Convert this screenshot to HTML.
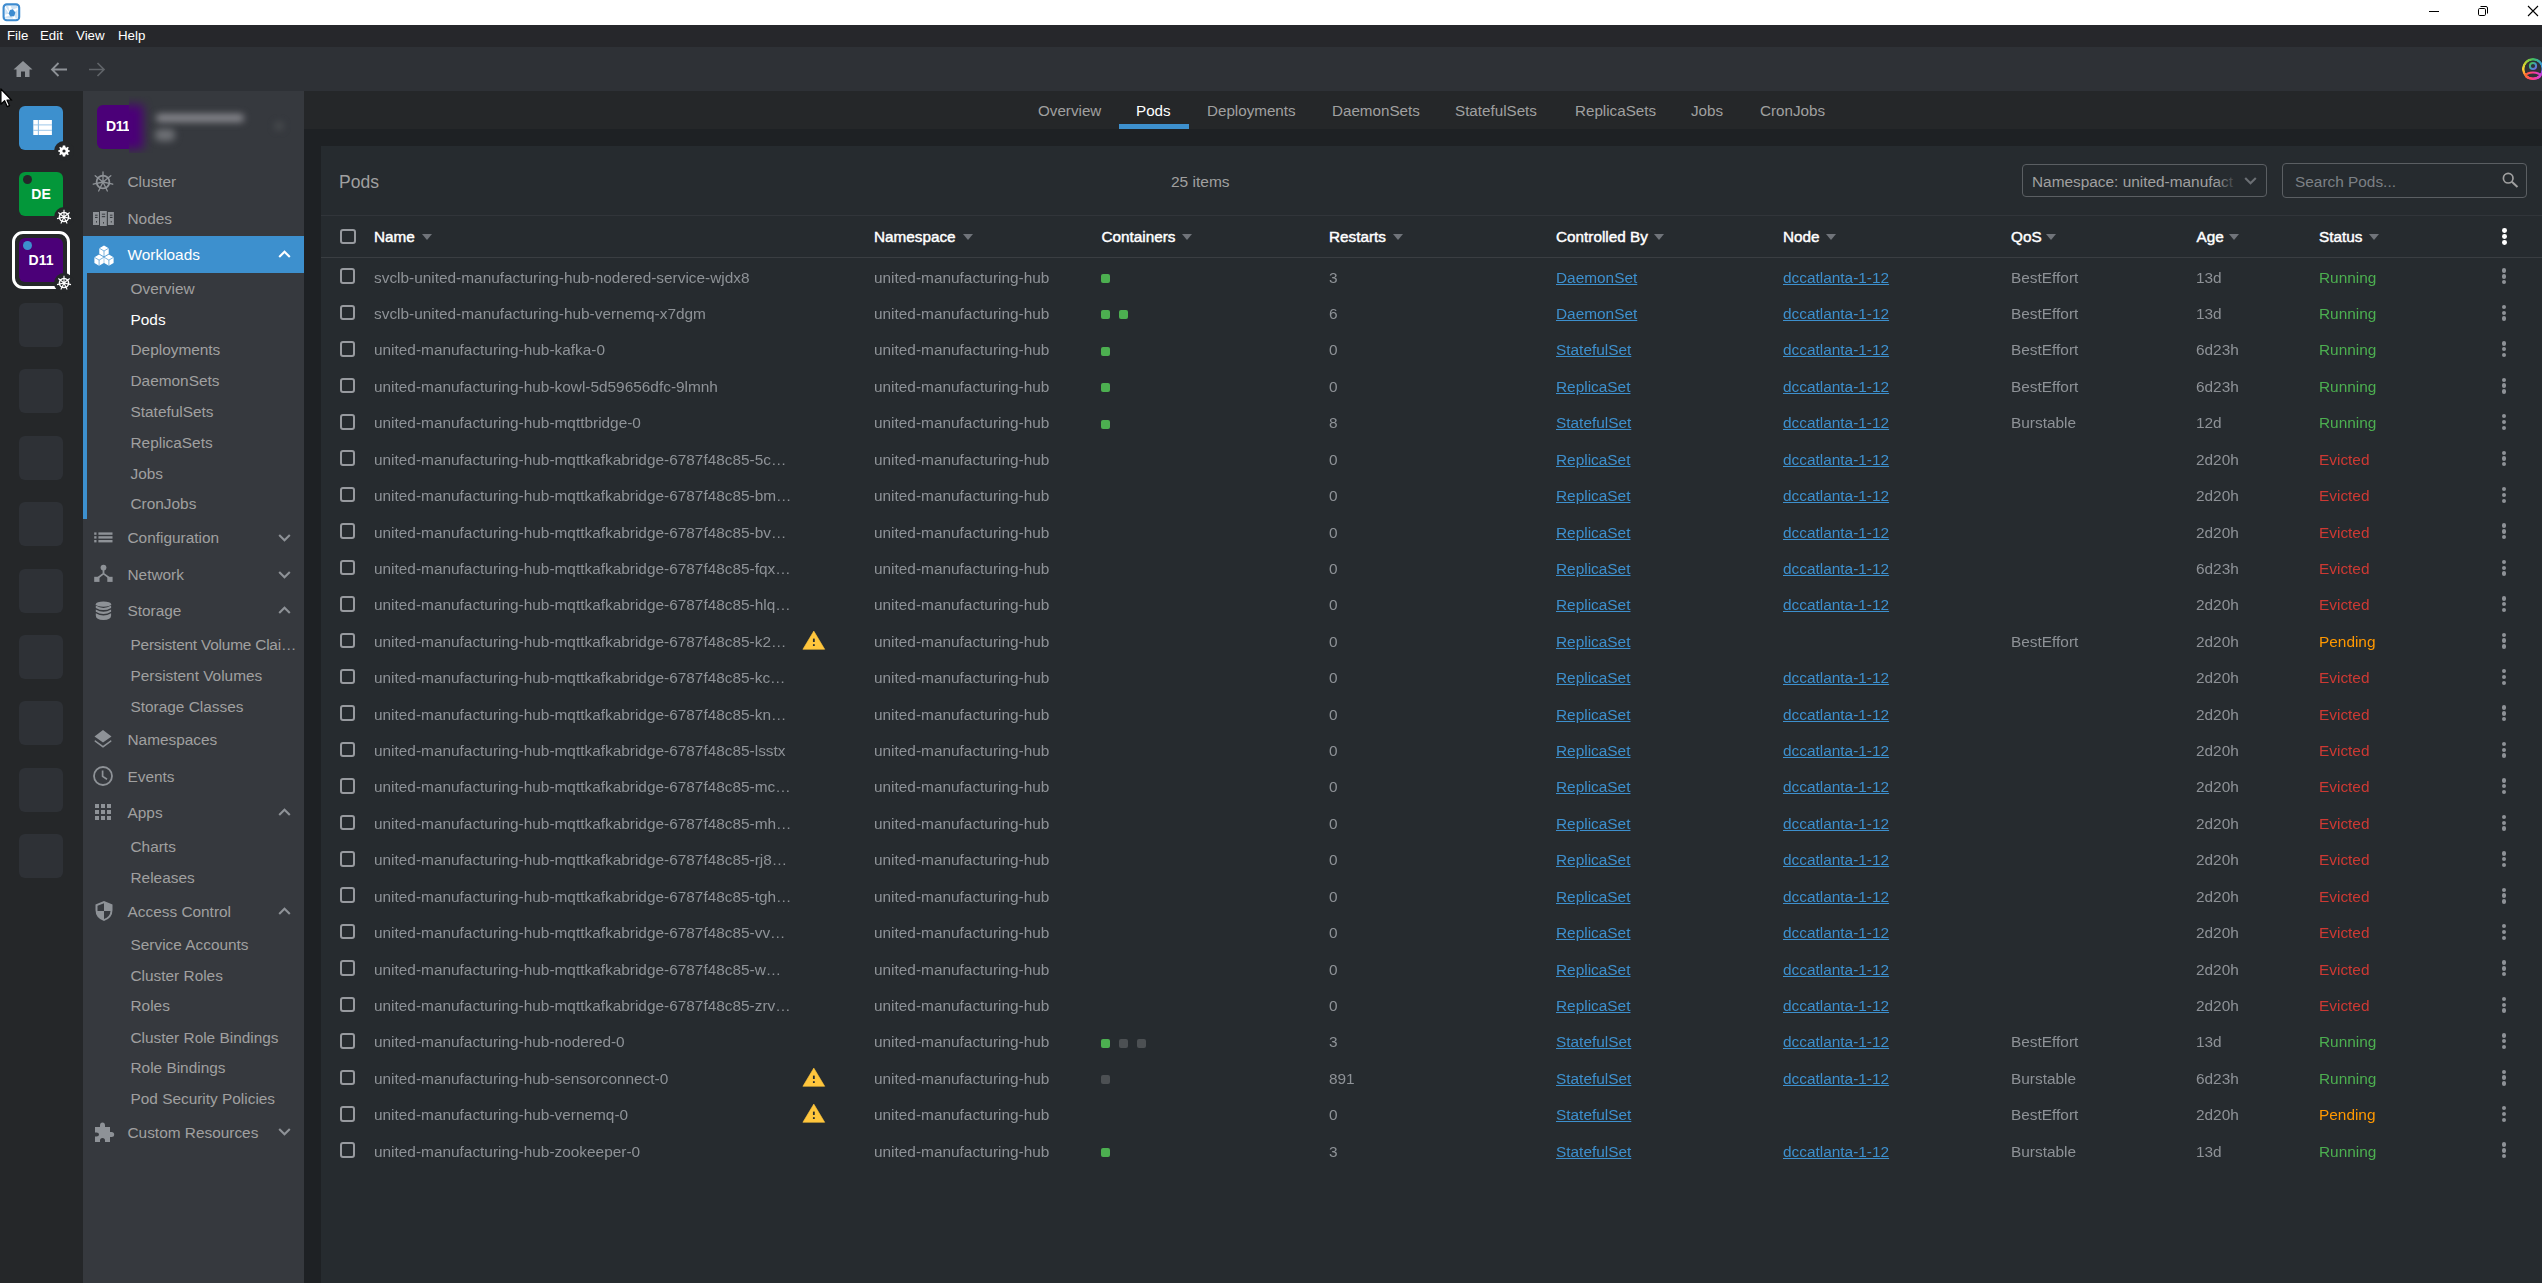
<!DOCTYPE html><html><head><meta charset="utf-8"><style>
*{box-sizing:border-box}
html,body{margin:0;padding:0;width:2542px;height:1283px;overflow:hidden;background:#1e2124;font-family:"Liberation Sans", sans-serif}
.abs{position:absolute}
a{color:#3d90ce;text-decoration:underline}
</style></head><body>

<div class="abs" style="left:0;top:0;width:2542px;height:25px;background:#ffffff"></div>
<svg class="abs" style="left:2px;top:3px" width="19" height="19" viewBox="0 0 19 19"><rect x="1.6" y="1.4" width="15.6" height="15.8" rx="3.2" fill="none" stroke="#3d8bd0" stroke-width="2.1"/><rect x="3.2" y="3" width="12.4" height="12.6" fill="#ffffff"/><path d="M3.2 3 L6.3 3 L7.6 9.5 Z M8.6 3 L15.6 3 L15.6 4.8 L10.2 6.8 Z M15.6 6.8 L15.6 15.6 L13.6 15.6 L12 9.5 Z M11.4 15.6 L3.2 15.6 L3.2 13.8 L8.8 12.2 Z M3.2 11.6 L3.2 5 L7 10.8 Z" fill="#cfe3f5"/><path d="M10.8 6.2 L13.4 9.6 L12.2 13.2 L8.4 13.6 L6.6 10.6 L8 7 Z" fill="#3d8bd0"/></svg>
<div class="abs" style="left:2429px;top:11px;width:10px;height:1px;background:#000"></div>
<svg class="abs" style="left:2477px;top:5px" width="12" height="12" viewBox="0 0 12 12"><rect x="1.5" y="3.5" width="7" height="7" rx="1.2" fill="none" stroke="#000" stroke-width="1"/><path d="M3.5 1.5 H9 Q10.5 1.5 10.5 3 V8.5" fill="none" stroke="#000" stroke-width="1"/></svg>
<svg class="abs" style="left:2527px;top:5px" width="12" height="12" viewBox="0 0 12 12"><path d="M1 1 L11 11 M11 1 L1 11" stroke="#000" stroke-width="1.1"/></svg>
<div class="abs" style="left:0;top:25px;width:2542px;height:22px;background:#26272b"></div>
<div style="position:absolute;left:7px;top:25.50px;height:20px;line-height:20px;font-size:13.3px;color:#ffffff;font-weight:400;white-space:nowrap;">File</div>
<div style="position:absolute;left:40px;top:25.50px;height:20px;line-height:20px;font-size:13.3px;color:#ffffff;font-weight:400;white-space:nowrap;">Edit</div>
<div style="position:absolute;left:76px;top:25.50px;height:20px;line-height:20px;font-size:13.3px;color:#ffffff;font-weight:400;white-space:nowrap;">View</div>
<div style="position:absolute;left:118px;top:25.50px;height:20px;line-height:20px;font-size:13.3px;color:#ffffff;font-weight:400;white-space:nowrap;">Help</div>
<div class="abs" style="left:0;top:47px;width:2542px;height:44px;background:#2e3136"></div>
<svg class="abs" style="left:12px;top:60px" width="22" height="18" viewBox="0 0 22 18"><path d="M11 1 L20.5 9.5 L17.5 9.5 L17.5 17 L13 17 L13 11.5 L9 11.5 L9 17 L4.5 17 L4.5 9.5 L1.5 9.5 Z" fill="#8e9297"/></svg>
<svg class="abs" style="left:50px;top:61px" width="18" height="17" viewBox="0 0 18 17"><path d="M17 8.5 H2.5 M8.5 2 L2 8.5 L8.5 15" fill="none" stroke="#8e9297" stroke-width="1.8"/></svg>
<svg class="abs" style="left:88px;top:61px" width="18" height="17" viewBox="0 0 18 17"><path d="M1 8.5 H15.5 M9.5 2 L16 8.5 L9.5 15" fill="none" stroke="#5f6368" stroke-width="1.7"/></svg>
<div class="abs" style="left:2521.6px;top:57.6px;width:22.6px;height:22.6px;border-radius:50%;background:conic-gradient(#3fbf5f 0deg,#3aa0c8 50deg,#3a8fe0 85deg,#b040e0 115deg,#e040c0 150deg,#ff3a78 190deg,#ff7a30 230deg,#ffd535 270deg,#b8d030 310deg,#3fbf5f 360deg);-webkit-mask:radial-gradient(circle closest-side,transparent 8.2px,#000 8.8px)"></div>
<svg class="abs" style="left:2520px;top:57px" width="26" height="26" viewBox="0 0 26 26">
<defs><linearGradient id="hg" x1="0" y1="0" x2="1" y2="1"><stop offset="0" stop-color="#50c040"/><stop offset="0.5" stop-color="#3aa0c0"/><stop offset="1" stop-color="#8060e0"/></linearGradient>
<linearGradient id="bg2" x1="0" y1="0" x2="1" y2="0"><stop offset="0" stop-color="#ff6a30"/><stop offset="0.5" stop-color="#ff3a90"/><stop offset="1" stop-color="#d040d8"/></linearGradient></defs>
<circle cx="13" cy="9" r="3.1" fill="none" stroke="url(#hg)" stroke-width="2"/>
<ellipse cx="13" cy="18.6" rx="7.4" ry="3.1" fill="none" stroke="url(#bg2)" stroke-width="2.1"/>
</svg>
<div class="abs" style="left:0;top:91px;width:83px;height:1192px;background:#252729"></div>
<svg class="abs" style="left:0;top:85px" width="16" height="25" viewBox="0 85 16 25"><path d="M0.9 89 L0.9 104.2 L4.6 100.8 L7.2 106.6 L9.5 105.6 L7.1 100.2 L11.7 100.2 Z" fill="#fff" stroke="#000" stroke-width="1.3" stroke-linejoin="round"/></svg>
<div class="abs" style="left:19px;top:106px;width:44px;height:44px;border-radius:6px;background:#3d90ce"></div>
<svg class="abs" style="left:33px;top:120px" width="19" height="15" viewBox="0 0 19 15"><rect x="0.3" y="0" width="18.6" height="15" fill="#fff"/><path d="M0 4.9 H19 M0 10.3 H19" stroke="#9cc6e8" stroke-width="1"/><path d="M5.4 0 V15" stroke="#8fbfe6" stroke-width="1.1"/></svg>
<div class="abs" style="left:53.5px;top:141px;width:20px;height:20px;border-radius:50%;background:#252729"></div><svg class="abs" style="left:57.5px;top:145px" width="12" height="12" viewBox="0 0 12 12"><path d="M6 0.6 L7.2 0.6 L7.5 2.2 L8.6 2.7 L9.9 1.8 L10.8 2.7 L9.9 4 L10.4 5.1 L11.9 5.4 L11.9 6.6 L10.4 6.9 L9.9 8 L10.8 9.3 L9.9 10.2 L8.6 9.3 L7.5 9.8 L7.2 11.4 L4.8 11.4 L4.5 9.8 L3.4 9.3 L2.1 10.2 L1.2 9.3 L2.1 8 L1.6 6.9 L0.1 6.6 L0.1 5.4 L1.6 5.1 L2.1 4 L1.2 2.7 L2.1 1.8 L3.4 2.7 L4.5 2.2 L4.8 0.6 Z" fill="#fff"/><circle cx="6" cy="6" r="1.6" fill="#252729"/></svg>
<div class="abs" style="left:19px;top:172px;width:44px;height:44px;border-radius:6px;background:#03973a"></div>
<div class="abs" style="left:23px;top:175px;width:9px;height:9px;border-radius:50%;background:#25272a"></div>
<div style="position:absolute;left:19px;top:184.00px;height:20px;line-height:20px;font-size:14px;color:#fff;font-weight:400;white-space:nowrap;width:44px"><b style="display:block;width:44px;text-align:center">DE</b></div>
<div class="abs" style="left:53.5px;top:207px;width:20px;height:20px;border-radius:50%;background:#252729"></div><svg class="abs" style="left:55.5px;top:209px" width="16" height="16" viewBox="0 0 16 16"><circle cx="8" cy="8" r="4.6" fill="none" stroke="#fff" stroke-width="1.5"/><path d="M8 8 L8.00 0.80" stroke="#fff" stroke-width="1.1"/><path d="M8 8 L13.63 3.51" stroke="#fff" stroke-width="1.1"/><path d="M8 8 L15.02 9.60" stroke="#fff" stroke-width="1.1"/><path d="M8 8 L11.12 14.49" stroke="#fff" stroke-width="1.1"/><path d="M8 8 L4.88 14.49" stroke="#fff" stroke-width="1.1"/><path d="M8 8 L0.98 9.60" stroke="#fff" stroke-width="1.1"/><path d="M8 8 L2.37 3.51" stroke="#fff" stroke-width="1.1"/><circle cx="8" cy="8" r="1.4" fill="#fff"/></svg>
<div class="abs" style="left:12px;top:231px;width:58px;height:58px;border-radius:11px;border:3.2px solid #fff"></div>
<div class="abs" style="left:19px;top:238px;width:44px;height:44px;border-radius:6px;background:#4b0078"></div>
<div class="abs" style="left:23px;top:241px;width:9px;height:9px;border-radius:50%;background:#3d90ce"></div>
<div style="position:absolute;left:19px;top:250.00px;height:20px;line-height:20px;font-size:14px;color:#fff;font-weight:400;white-space:nowrap;width:44px"><b style="display:block;width:44px;text-align:center">D11</b></div>
<div class="abs" style="left:53.5px;top:273px;width:20px;height:20px;border-radius:50%;background:#252729"></div><svg class="abs" style="left:55.5px;top:275px" width="16" height="16" viewBox="0 0 16 16"><circle cx="8" cy="8" r="4.6" fill="none" stroke="#fff" stroke-width="1.5"/><path d="M8 8 L8.00 0.80" stroke="#fff" stroke-width="1.1"/><path d="M8 8 L13.63 3.51" stroke="#fff" stroke-width="1.1"/><path d="M8 8 L15.02 9.60" stroke="#fff" stroke-width="1.1"/><path d="M8 8 L11.12 14.49" stroke="#fff" stroke-width="1.1"/><path d="M8 8 L4.88 14.49" stroke="#fff" stroke-width="1.1"/><path d="M8 8 L0.98 9.60" stroke="#fff" stroke-width="1.1"/><path d="M8 8 L2.37 3.51" stroke="#fff" stroke-width="1.1"/><circle cx="8" cy="8" r="1.4" fill="#fff"/></svg>
<div class="abs" style="left:19px;top:303.0px;width:44px;height:44px;border-radius:6px;background:#2e3136"></div>
<div class="abs" style="left:19px;top:369.4px;width:44px;height:44px;border-radius:6px;background:#2e3136"></div>
<div class="abs" style="left:19px;top:435.8px;width:44px;height:44px;border-radius:6px;background:#2e3136"></div>
<div class="abs" style="left:19px;top:502.2px;width:44px;height:44px;border-radius:6px;background:#2e3136"></div>
<div class="abs" style="left:19px;top:568.6px;width:44px;height:44px;border-radius:6px;background:#2e3136"></div>
<div class="abs" style="left:19px;top:635.0px;width:44px;height:44px;border-radius:6px;background:#2e3136"></div>
<div class="abs" style="left:19px;top:701.4px;width:44px;height:44px;border-radius:6px;background:#2e3136"></div>
<div class="abs" style="left:19px;top:767.8px;width:44px;height:44px;border-radius:6px;background:#2e3136"></div>
<div class="abs" style="left:19px;top:834.2px;width:44px;height:44px;border-radius:6px;background:#2e3136"></div>
<div class="abs" style="left:83px;top:91px;width:221px;height:1192px;background:#36393e"></div>
<div class="abs" style="left:97px;top:105px;width:32px;height:44px;border-radius:6px 0 0 6px;background:#4b0078;overflow:hidden"><div class="abs" style="left:9px;top:11px;height:20px;line-height:20px;font-size:14px;letter-spacing:-0.4px;font-weight:700;color:#fff;white-space:nowrap">D11</div></div>
<div class="abs" style="left:129px;top:96px;width:171px;height:57px;overflow:hidden;background:#36393e"><div class="abs" style="left:-22px;top:9px;width:36px;height:44px;background:#4b0078;filter:blur(5px)"></div><div class="abs" style="left:27px;top:18px;width:88px;height:8px;border-radius:4px;background:#8a8a90;filter:blur(3.5px)"></div><div class="abs" style="left:26px;top:33px;width:20px;height:12px;border-radius:5px;background:#6e7075;filter:blur(3.5px)"></div><div class="abs" style="left:145px;top:25px;width:10px;height:10px;border-radius:5px;background:#45484c;filter:blur(3px)"></div></div>
<svg class="abs" style="left:92.2px;top:170.5px" width="22" height="22" viewBox="0 0 22 22"><circle cx="11" cy="11" r="6.4" fill="none" stroke="#8e9297" stroke-width="1.8"/><path d="M11 11 L11.00 1.00" stroke="#8e9297" stroke-width="1.3" stroke-linecap="round"/><path d="M11 11 L18.82 4.77" stroke="#8e9297" stroke-width="1.3" stroke-linecap="round"/><path d="M11 11 L20.75 13.23" stroke="#8e9297" stroke-width="1.3" stroke-linecap="round"/><path d="M11 11 L15.34 20.01" stroke="#8e9297" stroke-width="1.3" stroke-linecap="round"/><path d="M11 11 L6.66 20.01" stroke="#8e9297" stroke-width="1.3" stroke-linecap="round"/><path d="M11 11 L1.25 13.23" stroke="#8e9297" stroke-width="1.3" stroke-linecap="round"/><path d="M11 11 L3.18 4.77" stroke="#8e9297" stroke-width="1.3" stroke-linecap="round"/><circle cx="11" cy="11" r="1.7" fill="#8e9297"/></svg>
<div style="position:absolute;left:127.5px;top:172.00px;height:20px;line-height:20px;font-size:15.4px;color:#a0a0a0;font-weight:400;white-space:nowrap;">Cluster</div>
<svg class="abs" style="left:90px;top:207px" width="28" height="23" viewBox="90 207 28 23"><rect x="93" y="212" width="6" height="13" fill="#8e9297"/><rect x="100" y="211" width="6.8" height="15" fill="#8e9297"/><rect x="107.9" y="212" width="6" height="13" fill="#8e9297"/><g fill="#36393e" opacity="0.75"><rect x="95" y="214.6" width="2.6" height="1.3"/><rect x="101.8" y="213.6" width="3.4" height="1.3"/><rect x="109.9" y="214.6" width="2.6" height="1.3"/></g><g fill="#36393e"><rect x="95" y="216.9" width="2.6" height="1.1"/><rect x="101.8" y="216.1" width="3.4" height="1.1"/><rect x="109.9" y="216.9" width="2.6" height="1.1"/><rect x="96" y="221" width="0.9" height="1.6"/><rect x="103" y="222" width="0.9" height="1.6"/><rect x="110.8" y="221" width="0.9" height="1.6"/></g></svg>
<div style="position:absolute;left:127.5px;top:209.00px;height:20px;line-height:20px;font-size:15.4px;color:#a0a0a0;font-weight:400;white-space:nowrap;">Nodes</div>
<div class="abs" style="left:83px;top:236px;width:221px;height:37px;background:#3d90ce"></div>
<svg class="abs" style="left:93.5px;top:244.5px" width="20" height="21" viewBox="0 0 20 21"><path d="M10 0.40000000000000036 L14.7 3.2 L14.7 8.8 L10 11.6 L5.3 8.8 L5.3 3.2 Z" fill="#ffffff"/><path d="M5.1 9.5 L9.8 12.3 L9.8 17.9 L5.1 20.7 L0.39999999999999947 17.9 L0.39999999999999947 12.3 Z" fill="#ffffff"/><path d="M14.9 9.5 L19.6 12.3 L19.6 17.9 L14.9 20.7 L10.2 17.9 L10.2 12.3 Z" fill="#ffffff"/><path d="M5.3 3.2 L10 6 L14.7 3.2 M10 6 V11.6" fill="none" stroke="#3d90ce" stroke-width="0.9" opacity="0.75"/><path d="M0.39999999999999947 12.3 L5.1 15.1 L9.8 12.3 M5.1 15.1 V20.7" fill="none" stroke="#3d90ce" stroke-width="0.9" opacity="0.75"/><path d="M10.2 12.3 L14.9 15.1 L19.6 12.3 M14.9 15.1 V20.7" fill="none" stroke="#3d90ce" stroke-width="0.9" opacity="0.75"/></svg>
<div style="position:absolute;left:127.5px;top:245.00px;height:20px;line-height:20px;font-size:15.4px;color:#ffffff;font-weight:400;white-space:nowrap;">Workloads</div>
<svg class="abs" style="left:278px;top:249.5px" width="13" height="9" viewBox="0 0 13 9"><path d="M1.2 7 L6.5 1.8 L11.8 7" fill="none" stroke="#ffffff" stroke-width="2.1"/></svg>
<div class="abs" style="left:83px;top:273px;width:4px;height:246px;background:#3d90ce"></div>
<div style="position:absolute;left:130.5px;top:279.00px;height:20px;line-height:20px;font-size:15.4px;color:#a0a0a0;font-weight:400;white-space:nowrap;">Overview</div>
<div style="position:absolute;left:130.5px;top:310.00px;height:20px;line-height:20px;font-size:15.4px;color:#ffffff;font-weight:400;white-space:nowrap;">Pods</div>
<div style="position:absolute;left:130.5px;top:340.00px;height:20px;line-height:20px;font-size:15.4px;color:#a0a0a0;font-weight:400;white-space:nowrap;">Deployments</div>
<div style="position:absolute;left:130.5px;top:371.00px;height:20px;line-height:20px;font-size:15.4px;color:#a0a0a0;font-weight:400;white-space:nowrap;">DaemonSets</div>
<div style="position:absolute;left:130.5px;top:402.00px;height:20px;line-height:20px;font-size:15.4px;color:#a0a0a0;font-weight:400;white-space:nowrap;">StatefulSets</div>
<div style="position:absolute;left:130.5px;top:433.00px;height:20px;line-height:20px;font-size:15.4px;color:#a0a0a0;font-weight:400;white-space:nowrap;">ReplicaSets</div>
<div style="position:absolute;left:130.5px;top:464.00px;height:20px;line-height:20px;font-size:15.4px;color:#a0a0a0;font-weight:400;white-space:nowrap;">Jobs</div>
<div style="position:absolute;left:130.5px;top:494.00px;height:20px;line-height:20px;font-size:15.4px;color:#a0a0a0;font-weight:400;white-space:nowrap;">CronJobs</div>
<svg class="abs" style="left:90px;top:527px" width="26" height="20" viewBox="90 527 26 20"><g fill="#8e9297"><rect x="94.2" y="532.4" width="2.3" height="2.4"/><rect x="98.4" y="532.4" width="14.1" height="2.4"/><rect x="94.2" y="536.2" width="2.3" height="2.4"/><rect x="98.4" y="536.2" width="14.1" height="2.4"/><rect x="94.2" y="540.0" width="2.3" height="2.4"/><rect x="98.4" y="540.0" width="14.1" height="2.4"/></g></svg>
<div style="position:absolute;left:127.5px;top:528.00px;height:20px;line-height:20px;font-size:15.4px;color:#a0a0a0;font-weight:400;white-space:nowrap;">Configuration</div>
<svg class="abs" style="left:278px;top:532.7px" width="13" height="9" viewBox="0 0 13 9"><path d="M1.2 2 L6.5 7.2 L11.8 2" fill="none" stroke="#8e9297" stroke-width="2.1"/></svg>
<svg class="abs" style="left:90px;top:560px" width="26" height="26" viewBox="90 560 26 26"><circle cx="103.5" cy="567.6" r="2.9" fill="#8e9297"/><path d="M103.5 569 V573.6 L97 578.5 M103.5 573.6 L110 578.5" fill="none" stroke="#8e9297" stroke-width="1.8"/><rect x="94.2" y="576.8" width="5.3" height="5.1" fill="#8e9297"/><rect x="107.3" y="576.8" width="5.3" height="5.1" fill="#8e9297"/></svg>
<div style="position:absolute;left:127.5px;top:565.00px;height:20px;line-height:20px;font-size:15.4px;color:#a0a0a0;font-weight:400;white-space:nowrap;">Network</div>
<svg class="abs" style="left:278px;top:569.7px" width="13" height="9" viewBox="0 0 13 9"><path d="M1.2 2 L6.5 7.2 L11.8 2" fill="none" stroke="#8e9297" stroke-width="2.1"/></svg>
<svg class="abs" style="left:90px;top:596px" width="26" height="28" viewBox="90 596 26 28"><ellipse cx="103.45" cy="604.2" rx="7.65" ry="2.6" fill="#8e9297"/><path d="M95.8 605.6 Q103.45 610.2 111.1 605.6 V607.9 Q103.45 612.3 95.8 607.9 Z" fill="#8e9297"/><path d="M95.8 609.4 Q103.45 614 111.1 609.4 V611.7 Q103.45 616.1 95.8 611.7 Z" fill="#8e9297"/><path d="M95.8 613.2 Q103.45 617.8 111.1 613.2 V615.6 Q111.1 620 103.45 620 Q95.8 620 95.8 615.6 Z" fill="#8e9297"/></svg>
<div style="position:absolute;left:127.5px;top:601.00px;height:20px;line-height:20px;font-size:15.4px;color:#a0a0a0;font-weight:400;white-space:nowrap;">Storage</div>
<svg class="abs" style="left:278px;top:605.5px" width="13" height="9" viewBox="0 0 13 9"><path d="M1.2 7 L6.5 1.8 L11.8 7" fill="none" stroke="#8e9297" stroke-width="2.1"/></svg>
<div style="position:absolute;left:130.5px;top:635.00px;height:20px;line-height:20px;font-size:15.4px;color:#a0a0a0;font-weight:400;white-space:nowrap;"><span style="letter-spacing:-0.2px">Persistent Volume Clai…</span></div>
<div style="position:absolute;left:130.5px;top:666.00px;height:20px;line-height:20px;font-size:15.4px;color:#a0a0a0;font-weight:400;white-space:nowrap;">Persistent Volumes</div>
<div style="position:absolute;left:130.5px;top:697.00px;height:20px;line-height:20px;font-size:15.4px;color:#a0a0a0;font-weight:400;white-space:nowrap;">Storage Classes</div>
<svg class="abs" style="left:92.8px;top:729.2px" width="20" height="20" viewBox="0 0 20 20"><path d="M10 1 L18.5 7.5 L10 13.5 L1.5 7.5 Z" fill="#8e9297"/><path d="M2 11 L10 16.8 L18 11 L18.5 12.5 L10 18.8 L1.5 12.5 Z" fill="#8e9297"/></svg>
<div style="position:absolute;left:127.5px;top:730.00px;height:20px;line-height:20px;font-size:15.4px;color:#a0a0a0;font-weight:400;white-space:nowrap;">Namespaces</div>
<svg class="abs" style="left:93.4px;top:765.5px" width="20" height="20" viewBox="0 0 20 20"><circle cx="10" cy="10" r="9" fill="none" stroke="#8e9297" stroke-width="1.8"/><path d="M9.6 4.6 V10.4 L14 13.2" fill="none" stroke="#8e9297" stroke-width="1.7"/></svg>
<div style="position:absolute;left:127.5px;top:767.00px;height:20px;line-height:20px;font-size:15.4px;color:#a0a0a0;font-weight:400;white-space:nowrap;">Events</div>
<svg class="abs" style="left:93.6px;top:803.3px" width="18" height="18" viewBox="0 0 18 18"><g fill="#8e9297"><rect x="1" y="1" width="4" height="4"/><rect x="1" y="7" width="4" height="4"/><rect x="1" y="13" width="4" height="4"/><rect x="7" y="1" width="4" height="4"/><rect x="7" y="7" width="4" height="4"/><rect x="7" y="13" width="4" height="4"/><rect x="13" y="1" width="4" height="4"/><rect x="13" y="7" width="4" height="4"/><rect x="13" y="13" width="4" height="4"/></g></svg>
<div style="position:absolute;left:127.5px;top:803.00px;height:20px;line-height:20px;font-size:15.4px;color:#a0a0a0;font-weight:400;white-space:nowrap;">Apps</div>
<svg class="abs" style="left:278px;top:807.5px" width="13" height="9" viewBox="0 0 13 9"><path d="M1.2 7 L6.5 1.8 L11.8 7" fill="none" stroke="#8e9297" stroke-width="2.1"/></svg>
<div style="position:absolute;left:130.5px;top:836.50px;height:20px;line-height:20px;font-size:15.4px;color:#a0a0a0;font-weight:400;white-space:nowrap;">Charts</div>
<div style="position:absolute;left:130.5px;top:868.00px;height:20px;line-height:20px;font-size:15.4px;color:#a0a0a0;font-weight:400;white-space:nowrap;">Releases</div>
<svg class="abs" style="left:93.5px;top:900px" width="20" height="22" viewBox="0 0 20 22"><path d="M10 1 L18.5 4.5 V10 Q18.5 18 10 21 Q1.5 18 1.5 10 V4.5 Z" fill="#8e9297"/><path d="M10 3.2 V11 H16.5 Q16 17 10 19 V11 H3.5 V5.8 Z" fill="#36393e"/></svg>
<div style="position:absolute;left:127.5px;top:901.50px;height:20px;line-height:20px;font-size:15.4px;color:#a0a0a0;font-weight:400;white-space:nowrap;">Access Control</div>
<svg class="abs" style="left:278px;top:906.5px" width="13" height="9" viewBox="0 0 13 9"><path d="M1.2 7 L6.5 1.8 L11.8 7" fill="none" stroke="#8e9297" stroke-width="2.1"/></svg>
<div style="position:absolute;left:130.5px;top:935.00px;height:20px;line-height:20px;font-size:15.4px;color:#a0a0a0;font-weight:400;white-space:nowrap;">Service Accounts</div>
<div style="position:absolute;left:130.5px;top:966.00px;height:20px;line-height:20px;font-size:15.4px;color:#a0a0a0;font-weight:400;white-space:nowrap;">Cluster Roles</div>
<div style="position:absolute;left:130.5px;top:996.00px;height:20px;line-height:20px;font-size:15.4px;color:#a0a0a0;font-weight:400;white-space:nowrap;">Roles</div>
<div style="position:absolute;left:130.5px;top:1027.50px;height:20px;line-height:20px;font-size:15.4px;color:#a0a0a0;font-weight:400;white-space:nowrap;">Cluster Role Bindings</div>
<div style="position:absolute;left:130.5px;top:1058.00px;height:20px;line-height:20px;font-size:15.4px;color:#a0a0a0;font-weight:400;white-space:nowrap;">Role Bindings</div>
<div style="position:absolute;left:130.5px;top:1089.00px;height:20px;line-height:20px;font-size:15.4px;color:#a0a0a0;font-weight:400;white-space:nowrap;">Pod Security Policies</div>
<svg class="abs" style="left:92.5px;top:1121px" width="22" height="22" viewBox="0 0 22 22"><path d="M2 6 H7 V4.5 Q7 1.5 9.5 1.5 Q12 1.5 12 4.5 V6 H17 V11 H18.5 Q21.2 11 21.2 13.5 Q21.2 16 18.5 16 H17 V21 H12 V19.5 Q12 17 9.5 17 Q7 17 7 19.5 V21 H2 V15.5 H3.5 Q6 15.5 6 13.5 Q6 11.5 3.5 11.5 H2 Z" fill="#8e9297"/></svg>
<div style="position:absolute;left:127.5px;top:1123.00px;height:20px;line-height:20px;font-size:15.4px;color:#a0a0a0;font-weight:400;white-space:nowrap;">Custom Resources</div>
<svg class="abs" style="left:278px;top:1126.7px" width="13" height="9" viewBox="0 0 13 9"><path d="M1.2 2 L6.5 7.2 L11.8 2" fill="none" stroke="#8e9297" stroke-width="2.1"/></svg>
<div class="abs" style="left:304px;top:91px;width:2238px;height:38px;background:#252729"></div>
<div style="position:absolute;left:1038px;top:100.50px;height:20px;line-height:20px;font-size:15.2px;color:#a0a0a0;font-weight:400;white-space:nowrap;">Overview</div>
<div style="position:absolute;left:1136px;top:100.50px;height:20px;line-height:20px;font-size:15.2px;color:#ffffff;font-weight:400;white-space:nowrap;">Pods</div>
<div style="position:absolute;left:1207px;top:100.50px;height:20px;line-height:20px;font-size:15.2px;color:#a0a0a0;font-weight:400;white-space:nowrap;">Deployments</div>
<div style="position:absolute;left:1332px;top:100.50px;height:20px;line-height:20px;font-size:15.2px;color:#a0a0a0;font-weight:400;white-space:nowrap;">DaemonSets</div>
<div style="position:absolute;left:1455px;top:100.50px;height:20px;line-height:20px;font-size:15.2px;color:#a0a0a0;font-weight:400;white-space:nowrap;">StatefulSets</div>
<div style="position:absolute;left:1575px;top:100.50px;height:20px;line-height:20px;font-size:15.2px;color:#a0a0a0;font-weight:400;white-space:nowrap;">ReplicaSets</div>
<div style="position:absolute;left:1691px;top:100.50px;height:20px;line-height:20px;font-size:15.2px;color:#a0a0a0;font-weight:400;white-space:nowrap;">Jobs</div>
<div style="position:absolute;left:1760px;top:100.50px;height:20px;line-height:20px;font-size:15.2px;color:#a0a0a0;font-weight:400;white-space:nowrap;">CronJobs</div>
<div class="abs" style="left:1119px;top:124px;width:70px;height:5px;background:#3d90ce"></div>
<div class="abs" style="left:321px;top:146px;width:2221px;height:1137px;background:#262b2f"></div>
<div style="position:absolute;left:339px;top:172.00px;height:20px;line-height:20px;font-size:17.5px;color:#a0a0a0;font-weight:400;white-space:nowrap;">Pods</div>
<div style="position:absolute;left:1171px;top:171.50px;height:20px;line-height:20px;font-size:15.5px;color:#a0a0a0;font-weight:400;white-space:nowrap;">25 items</div>
<div class="abs" style="left:2022px;top:164px;width:245px;height:33px;border:1px solid #5b5f63;border-radius:4px"></div>
<div class="abs" style="left:2032px;top:171px;width:204px;height:22px;overflow:hidden"><div style="position:absolute;left:0px;top:1.00px;height:20px;line-height:20px;font-size:15.4px;color:#a0a0a0;font-weight:400;white-space:nowrap;">Namespace: united-manufact</div></div>
<div class="abs" style="left:2216px;top:170px;width:22px;height:24px;background:linear-gradient(to right, rgba(38,43,47,0), #262b2f)"></div>
<svg class="abs" style="left:2244px;top:175.7px" width="13" height="9" viewBox="0 0 13 9"><path d="M1.2 2 L6.5 7.2 L11.8 2" fill="none" stroke="#6b6f74" stroke-width="2.1"/></svg>
<div class="abs" style="left:2282px;top:163px;width:245px;height:35px;border:1px solid #5b5f63;border-radius:4px"></div>
<div style="position:absolute;left:2295px;top:171.50px;height:20px;line-height:20px;font-size:15.4px;color:#7c8085;font-weight:400;white-space:nowrap;">Search Pods...</div>
<svg class="abs" style="left:2502px;top:172px" width="17" height="16" viewBox="0 0 17 16"><circle cx="6.2" cy="6.2" r="4.8" fill="none" stroke="#a0a0a0" stroke-width="1.7"/><path d="M9.8 9.8 L15.5 15" stroke="#a0a0a0" stroke-width="2"/></svg>
<div class="abs" style="left:321px;top:215px;width:2221px;height:1px;background:#31353a"></div>
<div class="abs" style="left:321px;top:257px;width:2221px;height:1px;background:#3a3e42"></div>
<div style="position:absolute;left:340px;top:229px;width:16px;height:15px;border:2px solid #979a9f;border-radius:3px"></div>
<div style="position:absolute;left:374px;top:227.00px;height:20px;line-height:20px;font-size:15.3px;color:#ffffff;font-weight:400;white-space:nowrap;-webkit-text-stroke:0.45px #ffffff">Name</div>
<div style="position:absolute;left:874px;top:227.00px;height:20px;line-height:20px;font-size:15.3px;color:#ffffff;font-weight:400;white-space:nowrap;-webkit-text-stroke:0.45px #ffffff">Namespace</div>
<div style="position:absolute;left:1101.5px;top:227.00px;height:20px;line-height:20px;font-size:15.3px;color:#ffffff;font-weight:400;white-space:nowrap;-webkit-text-stroke:0.45px #ffffff">Containers</div>
<div style="position:absolute;left:1329px;top:227.00px;height:20px;line-height:20px;font-size:15.3px;color:#ffffff;font-weight:400;white-space:nowrap;-webkit-text-stroke:0.45px #ffffff">Restarts</div>
<div style="position:absolute;left:1556px;top:227.00px;height:20px;line-height:20px;font-size:15.3px;color:#ffffff;font-weight:400;white-space:nowrap;-webkit-text-stroke:0.45px #ffffff">Controlled By</div>
<div style="position:absolute;left:1783px;top:227.00px;height:20px;line-height:20px;font-size:15.3px;color:#ffffff;font-weight:400;white-space:nowrap;-webkit-text-stroke:0.45px #ffffff">Node</div>
<div style="position:absolute;left:2011px;top:227.00px;height:20px;line-height:20px;font-size:15.3px;color:#ffffff;font-weight:400;white-space:nowrap;-webkit-text-stroke:0.45px #ffffff">QoS</div>
<div style="position:absolute;left:2196.5px;top:227.00px;height:20px;line-height:20px;font-size:15.3px;color:#ffffff;font-weight:400;white-space:nowrap;-webkit-text-stroke:0.45px #ffffff">Age</div>
<div style="position:absolute;left:2319px;top:227.00px;height:20px;line-height:20px;font-size:15.3px;color:#ffffff;font-weight:400;white-space:nowrap;-webkit-text-stroke:0.45px #ffffff">Status</div>
<div style="position:absolute;left:2502.40px;top:228.30px;width:4.8px;height:4.8px;border-radius:50%;background:#ffffff"></div><div style="position:absolute;left:2502.40px;top:234.10px;width:4.8px;height:4.8px;border-radius:50%;background:#ffffff"></div><div style="position:absolute;left:2502.40px;top:239.90px;width:4.8px;height:4.8px;border-radius:50%;background:#ffffff"></div>
<div style="position:absolute;left:422px;top:234px;width:0;height:0;border-left:5px solid transparent;border-right:5px solid transparent;border-top:6px solid #70747a"></div>
<div style="position:absolute;left:963px;top:234px;width:0;height:0;border-left:5px solid transparent;border-right:5px solid transparent;border-top:6px solid #70747a"></div>
<div style="position:absolute;left:1182px;top:234px;width:0;height:0;border-left:5px solid transparent;border-right:5px solid transparent;border-top:6px solid #70747a"></div>
<div style="position:absolute;left:1393px;top:234px;width:0;height:0;border-left:5px solid transparent;border-right:5px solid transparent;border-top:6px solid #70747a"></div>
<div style="position:absolute;left:1654px;top:234px;width:0;height:0;border-left:5px solid transparent;border-right:5px solid transparent;border-top:6px solid #70747a"></div>
<div style="position:absolute;left:1826px;top:234px;width:0;height:0;border-left:5px solid transparent;border-right:5px solid transparent;border-top:6px solid #70747a"></div>
<div style="position:absolute;left:2046px;top:234px;width:0;height:0;border-left:5px solid transparent;border-right:5px solid transparent;border-top:6px solid #70747a"></div>
<div style="position:absolute;left:2229px;top:234px;width:0;height:0;border-left:5px solid transparent;border-right:5px solid transparent;border-top:6px solid #70747a"></div>
<div style="position:absolute;left:2369px;top:234px;width:0;height:0;border-left:5px solid transparent;border-right:5px solid transparent;border-top:6px solid #70747a"></div>
<div style="position:absolute;left:0;top:0;width:2542px;height:1283px;will-change:transform">
<div style="position:absolute;left:340px;top:268.3px;width:15px;height:15.6px;border:2px solid #979a9f;border-radius:3px"></div>
<div style="position:absolute;left:374px;top:267.60px;height:20px;line-height:20px;font-size:15.4px;color:#8e9297;font-weight:400;white-space:nowrap;">svclb-united-manufacturing-hub-nodered-service-wjdx8</div>
<div style="position:absolute;left:874px;top:267.60px;height:20px;line-height:20px;font-size:15.4px;color:#8e9297;font-weight:400;white-space:nowrap;">united-manufacturing-hub</div>
<div class="abs" style="left:1101px;top:273.90px;width:9px;height:9px;border-radius:2px;background:#4caf50"></div>
<div style="position:absolute;left:1329px;top:267.60px;height:20px;line-height:20px;font-size:15.4px;color:#8e9297;font-weight:400;white-space:nowrap;">3</div>
<div style="position:absolute;left:1556px;top:267.60px;height:20px;line-height:20px;font-size:15.4px;color:#3d90ce;font-weight:400;white-space:nowrap;"><a>DaemonSet</a></div>
<div style="position:absolute;left:1783px;top:267.60px;height:20px;line-height:20px;font-size:15.4px;color:#3d90ce;font-weight:400;white-space:nowrap;"><a>dccatlanta-1-12</a></div>
<div style="position:absolute;left:2011px;top:267.60px;height:20px;line-height:20px;font-size:15.4px;color:#8e9297;font-weight:400;white-space:nowrap;">BestEffort</div>
<div style="position:absolute;left:2196px;top:267.60px;height:20px;line-height:20px;font-size:15.4px;color:#8e9297;font-weight:400;white-space:nowrap;">13d</div>
<div style="position:absolute;left:2319px;top:267.60px;height:20px;line-height:20px;font-size:15.4px;color:#4caf50;font-weight:400;white-space:nowrap;">Running</div>
<div style="position:absolute;left:2502.00px;top:268.40px;width:4.4px;height:4.4px;border-radius:50%;background:#8e9297"></div><div style="position:absolute;left:2502.00px;top:274.20px;width:4.4px;height:4.4px;border-radius:50%;background:#8e9297"></div><div style="position:absolute;left:2502.00px;top:280.00px;width:4.4px;height:4.4px;border-radius:50%;background:#8e9297"></div>
<div style="position:absolute;left:340px;top:304.7px;width:15px;height:15.6px;border:2px solid #979a9f;border-radius:3px"></div>
<div style="position:absolute;left:374px;top:304.02px;height:20px;line-height:20px;font-size:15.4px;color:#8e9297;font-weight:400;white-space:nowrap;">svclb-united-manufacturing-hub-vernemq-x7dgm</div>
<div style="position:absolute;left:874px;top:304.02px;height:20px;line-height:20px;font-size:15.4px;color:#8e9297;font-weight:400;white-space:nowrap;">united-manufacturing-hub</div>
<div class="abs" style="left:1101px;top:310.32px;width:9px;height:9px;border-radius:2px;background:#4caf50"></div>
<div class="abs" style="left:1119px;top:310.32px;width:9px;height:9px;border-radius:2px;background:#4caf50"></div>
<div style="position:absolute;left:1329px;top:304.02px;height:20px;line-height:20px;font-size:15.4px;color:#8e9297;font-weight:400;white-space:nowrap;">6</div>
<div style="position:absolute;left:1556px;top:304.02px;height:20px;line-height:20px;font-size:15.4px;color:#3d90ce;font-weight:400;white-space:nowrap;"><a>DaemonSet</a></div>
<div style="position:absolute;left:1783px;top:304.02px;height:20px;line-height:20px;font-size:15.4px;color:#3d90ce;font-weight:400;white-space:nowrap;"><a>dccatlanta-1-12</a></div>
<div style="position:absolute;left:2011px;top:304.02px;height:20px;line-height:20px;font-size:15.4px;color:#8e9297;font-weight:400;white-space:nowrap;">BestEffort</div>
<div style="position:absolute;left:2196px;top:304.02px;height:20px;line-height:20px;font-size:15.4px;color:#8e9297;font-weight:400;white-space:nowrap;">13d</div>
<div style="position:absolute;left:2319px;top:304.02px;height:20px;line-height:20px;font-size:15.4px;color:#4caf50;font-weight:400;white-space:nowrap;">Running</div>
<div style="position:absolute;left:2502.00px;top:304.82px;width:4.4px;height:4.4px;border-radius:50%;background:#8e9297"></div><div style="position:absolute;left:2502.00px;top:310.62px;width:4.4px;height:4.4px;border-radius:50%;background:#8e9297"></div><div style="position:absolute;left:2502.00px;top:316.42px;width:4.4px;height:4.4px;border-radius:50%;background:#8e9297"></div>
<div style="position:absolute;left:340px;top:341.1px;width:15px;height:15.6px;border:2px solid #979a9f;border-radius:3px"></div>
<div style="position:absolute;left:374px;top:340.44px;height:20px;line-height:20px;font-size:15.4px;color:#8e9297;font-weight:400;white-space:nowrap;">united-manufacturing-hub-kafka-0</div>
<div style="position:absolute;left:874px;top:340.44px;height:20px;line-height:20px;font-size:15.4px;color:#8e9297;font-weight:400;white-space:nowrap;">united-manufacturing-hub</div>
<div class="abs" style="left:1101px;top:346.74px;width:9px;height:9px;border-radius:2px;background:#4caf50"></div>
<div style="position:absolute;left:1329px;top:340.44px;height:20px;line-height:20px;font-size:15.4px;color:#8e9297;font-weight:400;white-space:nowrap;">0</div>
<div style="position:absolute;left:1556px;top:340.44px;height:20px;line-height:20px;font-size:15.4px;color:#3d90ce;font-weight:400;white-space:nowrap;"><a>StatefulSet</a></div>
<div style="position:absolute;left:1783px;top:340.44px;height:20px;line-height:20px;font-size:15.4px;color:#3d90ce;font-weight:400;white-space:nowrap;"><a>dccatlanta-1-12</a></div>
<div style="position:absolute;left:2011px;top:340.44px;height:20px;line-height:20px;font-size:15.4px;color:#8e9297;font-weight:400;white-space:nowrap;">BestEffort</div>
<div style="position:absolute;left:2196px;top:340.44px;height:20px;line-height:20px;font-size:15.4px;color:#8e9297;font-weight:400;white-space:nowrap;">6d23h</div>
<div style="position:absolute;left:2319px;top:340.44px;height:20px;line-height:20px;font-size:15.4px;color:#4caf50;font-weight:400;white-space:nowrap;">Running</div>
<div style="position:absolute;left:2502.00px;top:341.24px;width:4.4px;height:4.4px;border-radius:50%;background:#8e9297"></div><div style="position:absolute;left:2502.00px;top:347.04px;width:4.4px;height:4.4px;border-radius:50%;background:#8e9297"></div><div style="position:absolute;left:2502.00px;top:352.84px;width:4.4px;height:4.4px;border-radius:50%;background:#8e9297"></div>
<div style="position:absolute;left:340px;top:377.6px;width:15px;height:15.6px;border:2px solid #979a9f;border-radius:3px"></div>
<div style="position:absolute;left:374px;top:376.86px;height:20px;line-height:20px;font-size:15.4px;color:#8e9297;font-weight:400;white-space:nowrap;">united-manufacturing-hub-kowl-5d59656dfc-9lmnh</div>
<div style="position:absolute;left:874px;top:376.86px;height:20px;line-height:20px;font-size:15.4px;color:#8e9297;font-weight:400;white-space:nowrap;">united-manufacturing-hub</div>
<div class="abs" style="left:1101px;top:383.16px;width:9px;height:9px;border-radius:2px;background:#4caf50"></div>
<div style="position:absolute;left:1329px;top:376.86px;height:20px;line-height:20px;font-size:15.4px;color:#8e9297;font-weight:400;white-space:nowrap;">0</div>
<div style="position:absolute;left:1556px;top:376.86px;height:20px;line-height:20px;font-size:15.4px;color:#3d90ce;font-weight:400;white-space:nowrap;"><a>ReplicaSet</a></div>
<div style="position:absolute;left:1783px;top:376.86px;height:20px;line-height:20px;font-size:15.4px;color:#3d90ce;font-weight:400;white-space:nowrap;"><a>dccatlanta-1-12</a></div>
<div style="position:absolute;left:2011px;top:376.86px;height:20px;line-height:20px;font-size:15.4px;color:#8e9297;font-weight:400;white-space:nowrap;">BestEffort</div>
<div style="position:absolute;left:2196px;top:376.86px;height:20px;line-height:20px;font-size:15.4px;color:#8e9297;font-weight:400;white-space:nowrap;">6d23h</div>
<div style="position:absolute;left:2319px;top:376.86px;height:20px;line-height:20px;font-size:15.4px;color:#4caf50;font-weight:400;white-space:nowrap;">Running</div>
<div style="position:absolute;left:2502.00px;top:377.66px;width:4.4px;height:4.4px;border-radius:50%;background:#8e9297"></div><div style="position:absolute;left:2502.00px;top:383.46px;width:4.4px;height:4.4px;border-radius:50%;background:#8e9297"></div><div style="position:absolute;left:2502.00px;top:389.26px;width:4.4px;height:4.4px;border-radius:50%;background:#8e9297"></div>
<div style="position:absolute;left:340px;top:414.0px;width:15px;height:15.6px;border:2px solid #979a9f;border-radius:3px"></div>
<div style="position:absolute;left:374px;top:413.28px;height:20px;line-height:20px;font-size:15.4px;color:#8e9297;font-weight:400;white-space:nowrap;">united-manufacturing-hub-mqttbridge-0</div>
<div style="position:absolute;left:874px;top:413.28px;height:20px;line-height:20px;font-size:15.4px;color:#8e9297;font-weight:400;white-space:nowrap;">united-manufacturing-hub</div>
<div class="abs" style="left:1101px;top:419.58px;width:9px;height:9px;border-radius:2px;background:#4caf50"></div>
<div style="position:absolute;left:1329px;top:413.28px;height:20px;line-height:20px;font-size:15.4px;color:#8e9297;font-weight:400;white-space:nowrap;">8</div>
<div style="position:absolute;left:1556px;top:413.28px;height:20px;line-height:20px;font-size:15.4px;color:#3d90ce;font-weight:400;white-space:nowrap;"><a>StatefulSet</a></div>
<div style="position:absolute;left:1783px;top:413.28px;height:20px;line-height:20px;font-size:15.4px;color:#3d90ce;font-weight:400;white-space:nowrap;"><a>dccatlanta-1-12</a></div>
<div style="position:absolute;left:2011px;top:413.28px;height:20px;line-height:20px;font-size:15.4px;color:#8e9297;font-weight:400;white-space:nowrap;">Burstable</div>
<div style="position:absolute;left:2196px;top:413.28px;height:20px;line-height:20px;font-size:15.4px;color:#8e9297;font-weight:400;white-space:nowrap;">12d</div>
<div style="position:absolute;left:2319px;top:413.28px;height:20px;line-height:20px;font-size:15.4px;color:#4caf50;font-weight:400;white-space:nowrap;">Running</div>
<div style="position:absolute;left:2502.00px;top:414.08px;width:4.4px;height:4.4px;border-radius:50%;background:#8e9297"></div><div style="position:absolute;left:2502.00px;top:419.88px;width:4.4px;height:4.4px;border-radius:50%;background:#8e9297"></div><div style="position:absolute;left:2502.00px;top:425.68px;width:4.4px;height:4.4px;border-radius:50%;background:#8e9297"></div>
<div style="position:absolute;left:340px;top:450.4px;width:15px;height:15.6px;border:2px solid #979a9f;border-radius:3px"></div>
<div style="position:absolute;left:374px;top:449.70px;height:20px;line-height:20px;font-size:15.4px;color:#8e9297;font-weight:400;white-space:nowrap;">united-manufacturing-hub-mqttkafkabridge-6787f48c85-5c…</div>
<div style="position:absolute;left:874px;top:449.70px;height:20px;line-height:20px;font-size:15.4px;color:#8e9297;font-weight:400;white-space:nowrap;">united-manufacturing-hub</div>
<div style="position:absolute;left:1329px;top:449.70px;height:20px;line-height:20px;font-size:15.4px;color:#8e9297;font-weight:400;white-space:nowrap;">0</div>
<div style="position:absolute;left:1556px;top:449.70px;height:20px;line-height:20px;font-size:15.4px;color:#3d90ce;font-weight:400;white-space:nowrap;"><a>ReplicaSet</a></div>
<div style="position:absolute;left:1783px;top:449.70px;height:20px;line-height:20px;font-size:15.4px;color:#3d90ce;font-weight:400;white-space:nowrap;"><a>dccatlanta-1-12</a></div>
<div style="position:absolute;left:2196px;top:449.70px;height:20px;line-height:20px;font-size:15.4px;color:#8e9297;font-weight:400;white-space:nowrap;">2d20h</div>
<div style="position:absolute;left:2319px;top:449.70px;height:20px;line-height:20px;font-size:15.4px;color:#ce3933;font-weight:400;white-space:nowrap;">Evicted</div>
<div style="position:absolute;left:2502.00px;top:450.50px;width:4.4px;height:4.4px;border-radius:50%;background:#8e9297"></div><div style="position:absolute;left:2502.00px;top:456.30px;width:4.4px;height:4.4px;border-radius:50%;background:#8e9297"></div><div style="position:absolute;left:2502.00px;top:462.10px;width:4.4px;height:4.4px;border-radius:50%;background:#8e9297"></div>
<div style="position:absolute;left:340px;top:486.8px;width:15px;height:15.6px;border:2px solid #979a9f;border-radius:3px"></div>
<div style="position:absolute;left:374px;top:486.12px;height:20px;line-height:20px;font-size:15.4px;color:#8e9297;font-weight:400;white-space:nowrap;">united-manufacturing-hub-mqttkafkabridge-6787f48c85-bm…</div>
<div style="position:absolute;left:874px;top:486.12px;height:20px;line-height:20px;font-size:15.4px;color:#8e9297;font-weight:400;white-space:nowrap;">united-manufacturing-hub</div>
<div style="position:absolute;left:1329px;top:486.12px;height:20px;line-height:20px;font-size:15.4px;color:#8e9297;font-weight:400;white-space:nowrap;">0</div>
<div style="position:absolute;left:1556px;top:486.12px;height:20px;line-height:20px;font-size:15.4px;color:#3d90ce;font-weight:400;white-space:nowrap;"><a>ReplicaSet</a></div>
<div style="position:absolute;left:1783px;top:486.12px;height:20px;line-height:20px;font-size:15.4px;color:#3d90ce;font-weight:400;white-space:nowrap;"><a>dccatlanta-1-12</a></div>
<div style="position:absolute;left:2196px;top:486.12px;height:20px;line-height:20px;font-size:15.4px;color:#8e9297;font-weight:400;white-space:nowrap;">2d20h</div>
<div style="position:absolute;left:2319px;top:486.12px;height:20px;line-height:20px;font-size:15.4px;color:#ce3933;font-weight:400;white-space:nowrap;">Evicted</div>
<div style="position:absolute;left:2502.00px;top:486.92px;width:4.4px;height:4.4px;border-radius:50%;background:#8e9297"></div><div style="position:absolute;left:2502.00px;top:492.72px;width:4.4px;height:4.4px;border-radius:50%;background:#8e9297"></div><div style="position:absolute;left:2502.00px;top:498.52px;width:4.4px;height:4.4px;border-radius:50%;background:#8e9297"></div>
<div style="position:absolute;left:340px;top:523.2px;width:15px;height:15.6px;border:2px solid #979a9f;border-radius:3px"></div>
<div style="position:absolute;left:374px;top:522.54px;height:20px;line-height:20px;font-size:15.4px;color:#8e9297;font-weight:400;white-space:nowrap;">united-manufacturing-hub-mqttkafkabridge-6787f48c85-bv…</div>
<div style="position:absolute;left:874px;top:522.54px;height:20px;line-height:20px;font-size:15.4px;color:#8e9297;font-weight:400;white-space:nowrap;">united-manufacturing-hub</div>
<div style="position:absolute;left:1329px;top:522.54px;height:20px;line-height:20px;font-size:15.4px;color:#8e9297;font-weight:400;white-space:nowrap;">0</div>
<div style="position:absolute;left:1556px;top:522.54px;height:20px;line-height:20px;font-size:15.4px;color:#3d90ce;font-weight:400;white-space:nowrap;"><a>ReplicaSet</a></div>
<div style="position:absolute;left:1783px;top:522.54px;height:20px;line-height:20px;font-size:15.4px;color:#3d90ce;font-weight:400;white-space:nowrap;"><a>dccatlanta-1-12</a></div>
<div style="position:absolute;left:2196px;top:522.54px;height:20px;line-height:20px;font-size:15.4px;color:#8e9297;font-weight:400;white-space:nowrap;">2d20h</div>
<div style="position:absolute;left:2319px;top:522.54px;height:20px;line-height:20px;font-size:15.4px;color:#ce3933;font-weight:400;white-space:nowrap;">Evicted</div>
<div style="position:absolute;left:2502.00px;top:523.34px;width:4.4px;height:4.4px;border-radius:50%;background:#8e9297"></div><div style="position:absolute;left:2502.00px;top:529.14px;width:4.4px;height:4.4px;border-radius:50%;background:#8e9297"></div><div style="position:absolute;left:2502.00px;top:534.94px;width:4.4px;height:4.4px;border-radius:50%;background:#8e9297"></div>
<div style="position:absolute;left:340px;top:559.7px;width:15px;height:15.6px;border:2px solid #979a9f;border-radius:3px"></div>
<div style="position:absolute;left:374px;top:558.96px;height:20px;line-height:20px;font-size:15.4px;color:#8e9297;font-weight:400;white-space:nowrap;">united-manufacturing-hub-mqttkafkabridge-6787f48c85-fqx…</div>
<div style="position:absolute;left:874px;top:558.96px;height:20px;line-height:20px;font-size:15.4px;color:#8e9297;font-weight:400;white-space:nowrap;">united-manufacturing-hub</div>
<div style="position:absolute;left:1329px;top:558.96px;height:20px;line-height:20px;font-size:15.4px;color:#8e9297;font-weight:400;white-space:nowrap;">0</div>
<div style="position:absolute;left:1556px;top:558.96px;height:20px;line-height:20px;font-size:15.4px;color:#3d90ce;font-weight:400;white-space:nowrap;"><a>ReplicaSet</a></div>
<div style="position:absolute;left:1783px;top:558.96px;height:20px;line-height:20px;font-size:15.4px;color:#3d90ce;font-weight:400;white-space:nowrap;"><a>dccatlanta-1-12</a></div>
<div style="position:absolute;left:2196px;top:558.96px;height:20px;line-height:20px;font-size:15.4px;color:#8e9297;font-weight:400;white-space:nowrap;">6d23h</div>
<div style="position:absolute;left:2319px;top:558.96px;height:20px;line-height:20px;font-size:15.4px;color:#ce3933;font-weight:400;white-space:nowrap;">Evicted</div>
<div style="position:absolute;left:2502.00px;top:559.76px;width:4.4px;height:4.4px;border-radius:50%;background:#8e9297"></div><div style="position:absolute;left:2502.00px;top:565.56px;width:4.4px;height:4.4px;border-radius:50%;background:#8e9297"></div><div style="position:absolute;left:2502.00px;top:571.36px;width:4.4px;height:4.4px;border-radius:50%;background:#8e9297"></div>
<div style="position:absolute;left:340px;top:596.1px;width:15px;height:15.6px;border:2px solid #979a9f;border-radius:3px"></div>
<div style="position:absolute;left:374px;top:595.38px;height:20px;line-height:20px;font-size:15.4px;color:#8e9297;font-weight:400;white-space:nowrap;">united-manufacturing-hub-mqttkafkabridge-6787f48c85-hlq…</div>
<div style="position:absolute;left:874px;top:595.38px;height:20px;line-height:20px;font-size:15.4px;color:#8e9297;font-weight:400;white-space:nowrap;">united-manufacturing-hub</div>
<div style="position:absolute;left:1329px;top:595.38px;height:20px;line-height:20px;font-size:15.4px;color:#8e9297;font-weight:400;white-space:nowrap;">0</div>
<div style="position:absolute;left:1556px;top:595.38px;height:20px;line-height:20px;font-size:15.4px;color:#3d90ce;font-weight:400;white-space:nowrap;"><a>ReplicaSet</a></div>
<div style="position:absolute;left:1783px;top:595.38px;height:20px;line-height:20px;font-size:15.4px;color:#3d90ce;font-weight:400;white-space:nowrap;"><a>dccatlanta-1-12</a></div>
<div style="position:absolute;left:2196px;top:595.38px;height:20px;line-height:20px;font-size:15.4px;color:#8e9297;font-weight:400;white-space:nowrap;">2d20h</div>
<div style="position:absolute;left:2319px;top:595.38px;height:20px;line-height:20px;font-size:15.4px;color:#ce3933;font-weight:400;white-space:nowrap;">Evicted</div>
<div style="position:absolute;left:2502.00px;top:596.18px;width:4.4px;height:4.4px;border-radius:50%;background:#8e9297"></div><div style="position:absolute;left:2502.00px;top:601.98px;width:4.4px;height:4.4px;border-radius:50%;background:#8e9297"></div><div style="position:absolute;left:2502.00px;top:607.78px;width:4.4px;height:4.4px;border-radius:50%;background:#8e9297"></div>
<div style="position:absolute;left:340px;top:632.5px;width:15px;height:15.6px;border:2px solid #979a9f;border-radius:3px"></div>
<div style="position:absolute;left:374px;top:631.80px;height:20px;line-height:20px;font-size:15.4px;color:#8e9297;font-weight:400;white-space:nowrap;">united-manufacturing-hub-mqttkafkabridge-6787f48c85-k2…</div>
<svg style="position:absolute;left:802px;top:629.80px" width="24" height="21" viewBox="0 0 24 21"><path d="M11.8 1.1 L22.7 19.3 L0.9 19.3 Z" fill="#ffc63d" stroke="#ffc63d" stroke-width="0.6" stroke-linejoin="round"/><rect x="10.95" y="8.6" width="1.8" height="3.4" fill="#262b2f"/><rect x="10.95" y="14.2" width="1.8" height="1.8" fill="#262b2f"/></svg>
<div style="position:absolute;left:874px;top:631.80px;height:20px;line-height:20px;font-size:15.4px;color:#8e9297;font-weight:400;white-space:nowrap;">united-manufacturing-hub</div>
<div style="position:absolute;left:1329px;top:631.80px;height:20px;line-height:20px;font-size:15.4px;color:#8e9297;font-weight:400;white-space:nowrap;">0</div>
<div style="position:absolute;left:1556px;top:631.80px;height:20px;line-height:20px;font-size:15.4px;color:#3d90ce;font-weight:400;white-space:nowrap;"><a>ReplicaSet</a></div>
<div style="position:absolute;left:2011px;top:631.80px;height:20px;line-height:20px;font-size:15.4px;color:#8e9297;font-weight:400;white-space:nowrap;">BestEffort</div>
<div style="position:absolute;left:2196px;top:631.80px;height:20px;line-height:20px;font-size:15.4px;color:#8e9297;font-weight:400;white-space:nowrap;">2d20h</div>
<div style="position:absolute;left:2319px;top:631.80px;height:20px;line-height:20px;font-size:15.4px;color:#ff9800;font-weight:400;white-space:nowrap;">Pending</div>
<div style="position:absolute;left:2502.00px;top:632.60px;width:4.4px;height:4.4px;border-radius:50%;background:#8e9297"></div><div style="position:absolute;left:2502.00px;top:638.40px;width:4.4px;height:4.4px;border-radius:50%;background:#8e9297"></div><div style="position:absolute;left:2502.00px;top:644.20px;width:4.4px;height:4.4px;border-radius:50%;background:#8e9297"></div>
<div style="position:absolute;left:340px;top:668.9px;width:15px;height:15.6px;border:2px solid #979a9f;border-radius:3px"></div>
<div style="position:absolute;left:374px;top:668.22px;height:20px;line-height:20px;font-size:15.4px;color:#8e9297;font-weight:400;white-space:nowrap;">united-manufacturing-hub-mqttkafkabridge-6787f48c85-kc…</div>
<div style="position:absolute;left:874px;top:668.22px;height:20px;line-height:20px;font-size:15.4px;color:#8e9297;font-weight:400;white-space:nowrap;">united-manufacturing-hub</div>
<div style="position:absolute;left:1329px;top:668.22px;height:20px;line-height:20px;font-size:15.4px;color:#8e9297;font-weight:400;white-space:nowrap;">0</div>
<div style="position:absolute;left:1556px;top:668.22px;height:20px;line-height:20px;font-size:15.4px;color:#3d90ce;font-weight:400;white-space:nowrap;"><a>ReplicaSet</a></div>
<div style="position:absolute;left:1783px;top:668.22px;height:20px;line-height:20px;font-size:15.4px;color:#3d90ce;font-weight:400;white-space:nowrap;"><a>dccatlanta-1-12</a></div>
<div style="position:absolute;left:2196px;top:668.22px;height:20px;line-height:20px;font-size:15.4px;color:#8e9297;font-weight:400;white-space:nowrap;">2d20h</div>
<div style="position:absolute;left:2319px;top:668.22px;height:20px;line-height:20px;font-size:15.4px;color:#ce3933;font-weight:400;white-space:nowrap;">Evicted</div>
<div style="position:absolute;left:2502.00px;top:669.02px;width:4.4px;height:4.4px;border-radius:50%;background:#8e9297"></div><div style="position:absolute;left:2502.00px;top:674.82px;width:4.4px;height:4.4px;border-radius:50%;background:#8e9297"></div><div style="position:absolute;left:2502.00px;top:680.62px;width:4.4px;height:4.4px;border-radius:50%;background:#8e9297"></div>
<div style="position:absolute;left:340px;top:705.3px;width:15px;height:15.6px;border:2px solid #979a9f;border-radius:3px"></div>
<div style="position:absolute;left:374px;top:704.64px;height:20px;line-height:20px;font-size:15.4px;color:#8e9297;font-weight:400;white-space:nowrap;">united-manufacturing-hub-mqttkafkabridge-6787f48c85-kn…</div>
<div style="position:absolute;left:874px;top:704.64px;height:20px;line-height:20px;font-size:15.4px;color:#8e9297;font-weight:400;white-space:nowrap;">united-manufacturing-hub</div>
<div style="position:absolute;left:1329px;top:704.64px;height:20px;line-height:20px;font-size:15.4px;color:#8e9297;font-weight:400;white-space:nowrap;">0</div>
<div style="position:absolute;left:1556px;top:704.64px;height:20px;line-height:20px;font-size:15.4px;color:#3d90ce;font-weight:400;white-space:nowrap;"><a>ReplicaSet</a></div>
<div style="position:absolute;left:1783px;top:704.64px;height:20px;line-height:20px;font-size:15.4px;color:#3d90ce;font-weight:400;white-space:nowrap;"><a>dccatlanta-1-12</a></div>
<div style="position:absolute;left:2196px;top:704.64px;height:20px;line-height:20px;font-size:15.4px;color:#8e9297;font-weight:400;white-space:nowrap;">2d20h</div>
<div style="position:absolute;left:2319px;top:704.64px;height:20px;line-height:20px;font-size:15.4px;color:#ce3933;font-weight:400;white-space:nowrap;">Evicted</div>
<div style="position:absolute;left:2502.00px;top:705.44px;width:4.4px;height:4.4px;border-radius:50%;background:#8e9297"></div><div style="position:absolute;left:2502.00px;top:711.24px;width:4.4px;height:4.4px;border-radius:50%;background:#8e9297"></div><div style="position:absolute;left:2502.00px;top:717.04px;width:4.4px;height:4.4px;border-radius:50%;background:#8e9297"></div>
<div style="position:absolute;left:340px;top:741.8px;width:15px;height:15.6px;border:2px solid #979a9f;border-radius:3px"></div>
<div style="position:absolute;left:374px;top:741.06px;height:20px;line-height:20px;font-size:15.4px;color:#8e9297;font-weight:400;white-space:nowrap;">united-manufacturing-hub-mqttkafkabridge-6787f48c85-lsstx</div>
<div style="position:absolute;left:874px;top:741.06px;height:20px;line-height:20px;font-size:15.4px;color:#8e9297;font-weight:400;white-space:nowrap;">united-manufacturing-hub</div>
<div style="position:absolute;left:1329px;top:741.06px;height:20px;line-height:20px;font-size:15.4px;color:#8e9297;font-weight:400;white-space:nowrap;">0</div>
<div style="position:absolute;left:1556px;top:741.06px;height:20px;line-height:20px;font-size:15.4px;color:#3d90ce;font-weight:400;white-space:nowrap;"><a>ReplicaSet</a></div>
<div style="position:absolute;left:1783px;top:741.06px;height:20px;line-height:20px;font-size:15.4px;color:#3d90ce;font-weight:400;white-space:nowrap;"><a>dccatlanta-1-12</a></div>
<div style="position:absolute;left:2196px;top:741.06px;height:20px;line-height:20px;font-size:15.4px;color:#8e9297;font-weight:400;white-space:nowrap;">2d20h</div>
<div style="position:absolute;left:2319px;top:741.06px;height:20px;line-height:20px;font-size:15.4px;color:#ce3933;font-weight:400;white-space:nowrap;">Evicted</div>
<div style="position:absolute;left:2502.00px;top:741.86px;width:4.4px;height:4.4px;border-radius:50%;background:#8e9297"></div><div style="position:absolute;left:2502.00px;top:747.66px;width:4.4px;height:4.4px;border-radius:50%;background:#8e9297"></div><div style="position:absolute;left:2502.00px;top:753.46px;width:4.4px;height:4.4px;border-radius:50%;background:#8e9297"></div>
<div style="position:absolute;left:340px;top:778.2px;width:15px;height:15.6px;border:2px solid #979a9f;border-radius:3px"></div>
<div style="position:absolute;left:374px;top:777.48px;height:20px;line-height:20px;font-size:15.4px;color:#8e9297;font-weight:400;white-space:nowrap;">united-manufacturing-hub-mqttkafkabridge-6787f48c85-mc…</div>
<div style="position:absolute;left:874px;top:777.48px;height:20px;line-height:20px;font-size:15.4px;color:#8e9297;font-weight:400;white-space:nowrap;">united-manufacturing-hub</div>
<div style="position:absolute;left:1329px;top:777.48px;height:20px;line-height:20px;font-size:15.4px;color:#8e9297;font-weight:400;white-space:nowrap;">0</div>
<div style="position:absolute;left:1556px;top:777.48px;height:20px;line-height:20px;font-size:15.4px;color:#3d90ce;font-weight:400;white-space:nowrap;"><a>ReplicaSet</a></div>
<div style="position:absolute;left:1783px;top:777.48px;height:20px;line-height:20px;font-size:15.4px;color:#3d90ce;font-weight:400;white-space:nowrap;"><a>dccatlanta-1-12</a></div>
<div style="position:absolute;left:2196px;top:777.48px;height:20px;line-height:20px;font-size:15.4px;color:#8e9297;font-weight:400;white-space:nowrap;">2d20h</div>
<div style="position:absolute;left:2319px;top:777.48px;height:20px;line-height:20px;font-size:15.4px;color:#ce3933;font-weight:400;white-space:nowrap;">Evicted</div>
<div style="position:absolute;left:2502.00px;top:778.28px;width:4.4px;height:4.4px;border-radius:50%;background:#8e9297"></div><div style="position:absolute;left:2502.00px;top:784.08px;width:4.4px;height:4.4px;border-radius:50%;background:#8e9297"></div><div style="position:absolute;left:2502.00px;top:789.88px;width:4.4px;height:4.4px;border-radius:50%;background:#8e9297"></div>
<div style="position:absolute;left:340px;top:814.6px;width:15px;height:15.6px;border:2px solid #979a9f;border-radius:3px"></div>
<div style="position:absolute;left:374px;top:813.90px;height:20px;line-height:20px;font-size:15.4px;color:#8e9297;font-weight:400;white-space:nowrap;">united-manufacturing-hub-mqttkafkabridge-6787f48c85-mh…</div>
<div style="position:absolute;left:874px;top:813.90px;height:20px;line-height:20px;font-size:15.4px;color:#8e9297;font-weight:400;white-space:nowrap;">united-manufacturing-hub</div>
<div style="position:absolute;left:1329px;top:813.90px;height:20px;line-height:20px;font-size:15.4px;color:#8e9297;font-weight:400;white-space:nowrap;">0</div>
<div style="position:absolute;left:1556px;top:813.90px;height:20px;line-height:20px;font-size:15.4px;color:#3d90ce;font-weight:400;white-space:nowrap;"><a>ReplicaSet</a></div>
<div style="position:absolute;left:1783px;top:813.90px;height:20px;line-height:20px;font-size:15.4px;color:#3d90ce;font-weight:400;white-space:nowrap;"><a>dccatlanta-1-12</a></div>
<div style="position:absolute;left:2196px;top:813.90px;height:20px;line-height:20px;font-size:15.4px;color:#8e9297;font-weight:400;white-space:nowrap;">2d20h</div>
<div style="position:absolute;left:2319px;top:813.90px;height:20px;line-height:20px;font-size:15.4px;color:#ce3933;font-weight:400;white-space:nowrap;">Evicted</div>
<div style="position:absolute;left:2502.00px;top:814.70px;width:4.4px;height:4.4px;border-radius:50%;background:#8e9297"></div><div style="position:absolute;left:2502.00px;top:820.50px;width:4.4px;height:4.4px;border-radius:50%;background:#8e9297"></div><div style="position:absolute;left:2502.00px;top:826.30px;width:4.4px;height:4.4px;border-radius:50%;background:#8e9297"></div>
<div style="position:absolute;left:340px;top:851.0px;width:15px;height:15.6px;border:2px solid #979a9f;border-radius:3px"></div>
<div style="position:absolute;left:374px;top:850.32px;height:20px;line-height:20px;font-size:15.4px;color:#8e9297;font-weight:400;white-space:nowrap;">united-manufacturing-hub-mqttkafkabridge-6787f48c85-rj8…</div>
<div style="position:absolute;left:874px;top:850.32px;height:20px;line-height:20px;font-size:15.4px;color:#8e9297;font-weight:400;white-space:nowrap;">united-manufacturing-hub</div>
<div style="position:absolute;left:1329px;top:850.32px;height:20px;line-height:20px;font-size:15.4px;color:#8e9297;font-weight:400;white-space:nowrap;">0</div>
<div style="position:absolute;left:1556px;top:850.32px;height:20px;line-height:20px;font-size:15.4px;color:#3d90ce;font-weight:400;white-space:nowrap;"><a>ReplicaSet</a></div>
<div style="position:absolute;left:1783px;top:850.32px;height:20px;line-height:20px;font-size:15.4px;color:#3d90ce;font-weight:400;white-space:nowrap;"><a>dccatlanta-1-12</a></div>
<div style="position:absolute;left:2196px;top:850.32px;height:20px;line-height:20px;font-size:15.4px;color:#8e9297;font-weight:400;white-space:nowrap;">2d20h</div>
<div style="position:absolute;left:2319px;top:850.32px;height:20px;line-height:20px;font-size:15.4px;color:#ce3933;font-weight:400;white-space:nowrap;">Evicted</div>
<div style="position:absolute;left:2502.00px;top:851.12px;width:4.4px;height:4.4px;border-radius:50%;background:#8e9297"></div><div style="position:absolute;left:2502.00px;top:856.92px;width:4.4px;height:4.4px;border-radius:50%;background:#8e9297"></div><div style="position:absolute;left:2502.00px;top:862.72px;width:4.4px;height:4.4px;border-radius:50%;background:#8e9297"></div>
<div style="position:absolute;left:340px;top:887.4px;width:15px;height:15.6px;border:2px solid #979a9f;border-radius:3px"></div>
<div style="position:absolute;left:374px;top:886.74px;height:20px;line-height:20px;font-size:15.4px;color:#8e9297;font-weight:400;white-space:nowrap;">united-manufacturing-hub-mqttkafkabridge-6787f48c85-tgh…</div>
<div style="position:absolute;left:874px;top:886.74px;height:20px;line-height:20px;font-size:15.4px;color:#8e9297;font-weight:400;white-space:nowrap;">united-manufacturing-hub</div>
<div style="position:absolute;left:1329px;top:886.74px;height:20px;line-height:20px;font-size:15.4px;color:#8e9297;font-weight:400;white-space:nowrap;">0</div>
<div style="position:absolute;left:1556px;top:886.74px;height:20px;line-height:20px;font-size:15.4px;color:#3d90ce;font-weight:400;white-space:nowrap;"><a>ReplicaSet</a></div>
<div style="position:absolute;left:1783px;top:886.74px;height:20px;line-height:20px;font-size:15.4px;color:#3d90ce;font-weight:400;white-space:nowrap;"><a>dccatlanta-1-12</a></div>
<div style="position:absolute;left:2196px;top:886.74px;height:20px;line-height:20px;font-size:15.4px;color:#8e9297;font-weight:400;white-space:nowrap;">2d20h</div>
<div style="position:absolute;left:2319px;top:886.74px;height:20px;line-height:20px;font-size:15.4px;color:#ce3933;font-weight:400;white-space:nowrap;">Evicted</div>
<div style="position:absolute;left:2502.00px;top:887.54px;width:4.4px;height:4.4px;border-radius:50%;background:#8e9297"></div><div style="position:absolute;left:2502.00px;top:893.34px;width:4.4px;height:4.4px;border-radius:50%;background:#8e9297"></div><div style="position:absolute;left:2502.00px;top:899.14px;width:4.4px;height:4.4px;border-radius:50%;background:#8e9297"></div>
<div style="position:absolute;left:340px;top:923.9px;width:15px;height:15.6px;border:2px solid #979a9f;border-radius:3px"></div>
<div style="position:absolute;left:374px;top:923.16px;height:20px;line-height:20px;font-size:15.4px;color:#8e9297;font-weight:400;white-space:nowrap;">united-manufacturing-hub-mqttkafkabridge-6787f48c85-vv…</div>
<div style="position:absolute;left:874px;top:923.16px;height:20px;line-height:20px;font-size:15.4px;color:#8e9297;font-weight:400;white-space:nowrap;">united-manufacturing-hub</div>
<div style="position:absolute;left:1329px;top:923.16px;height:20px;line-height:20px;font-size:15.4px;color:#8e9297;font-weight:400;white-space:nowrap;">0</div>
<div style="position:absolute;left:1556px;top:923.16px;height:20px;line-height:20px;font-size:15.4px;color:#3d90ce;font-weight:400;white-space:nowrap;"><a>ReplicaSet</a></div>
<div style="position:absolute;left:1783px;top:923.16px;height:20px;line-height:20px;font-size:15.4px;color:#3d90ce;font-weight:400;white-space:nowrap;"><a>dccatlanta-1-12</a></div>
<div style="position:absolute;left:2196px;top:923.16px;height:20px;line-height:20px;font-size:15.4px;color:#8e9297;font-weight:400;white-space:nowrap;">2d20h</div>
<div style="position:absolute;left:2319px;top:923.16px;height:20px;line-height:20px;font-size:15.4px;color:#ce3933;font-weight:400;white-space:nowrap;">Evicted</div>
<div style="position:absolute;left:2502.00px;top:923.96px;width:4.4px;height:4.4px;border-radius:50%;background:#8e9297"></div><div style="position:absolute;left:2502.00px;top:929.76px;width:4.4px;height:4.4px;border-radius:50%;background:#8e9297"></div><div style="position:absolute;left:2502.00px;top:935.56px;width:4.4px;height:4.4px;border-radius:50%;background:#8e9297"></div>
<div style="position:absolute;left:340px;top:960.3px;width:15px;height:15.6px;border:2px solid #979a9f;border-radius:3px"></div>
<div style="position:absolute;left:374px;top:959.58px;height:20px;line-height:20px;font-size:15.4px;color:#8e9297;font-weight:400;white-space:nowrap;">united-manufacturing-hub-mqttkafkabridge-6787f48c85-w…</div>
<div style="position:absolute;left:874px;top:959.58px;height:20px;line-height:20px;font-size:15.4px;color:#8e9297;font-weight:400;white-space:nowrap;">united-manufacturing-hub</div>
<div style="position:absolute;left:1329px;top:959.58px;height:20px;line-height:20px;font-size:15.4px;color:#8e9297;font-weight:400;white-space:nowrap;">0</div>
<div style="position:absolute;left:1556px;top:959.58px;height:20px;line-height:20px;font-size:15.4px;color:#3d90ce;font-weight:400;white-space:nowrap;"><a>ReplicaSet</a></div>
<div style="position:absolute;left:1783px;top:959.58px;height:20px;line-height:20px;font-size:15.4px;color:#3d90ce;font-weight:400;white-space:nowrap;"><a>dccatlanta-1-12</a></div>
<div style="position:absolute;left:2196px;top:959.58px;height:20px;line-height:20px;font-size:15.4px;color:#8e9297;font-weight:400;white-space:nowrap;">2d20h</div>
<div style="position:absolute;left:2319px;top:959.58px;height:20px;line-height:20px;font-size:15.4px;color:#ce3933;font-weight:400;white-space:nowrap;">Evicted</div>
<div style="position:absolute;left:2502.00px;top:960.38px;width:4.4px;height:4.4px;border-radius:50%;background:#8e9297"></div><div style="position:absolute;left:2502.00px;top:966.18px;width:4.4px;height:4.4px;border-radius:50%;background:#8e9297"></div><div style="position:absolute;left:2502.00px;top:971.98px;width:4.4px;height:4.4px;border-radius:50%;background:#8e9297"></div>
<div style="position:absolute;left:340px;top:996.7px;width:15px;height:15.6px;border:2px solid #979a9f;border-radius:3px"></div>
<div style="position:absolute;left:374px;top:996.00px;height:20px;line-height:20px;font-size:15.4px;color:#8e9297;font-weight:400;white-space:nowrap;">united-manufacturing-hub-mqttkafkabridge-6787f48c85-zrv…</div>
<div style="position:absolute;left:874px;top:996.00px;height:20px;line-height:20px;font-size:15.4px;color:#8e9297;font-weight:400;white-space:nowrap;">united-manufacturing-hub</div>
<div style="position:absolute;left:1329px;top:996.00px;height:20px;line-height:20px;font-size:15.4px;color:#8e9297;font-weight:400;white-space:nowrap;">0</div>
<div style="position:absolute;left:1556px;top:996.00px;height:20px;line-height:20px;font-size:15.4px;color:#3d90ce;font-weight:400;white-space:nowrap;"><a>ReplicaSet</a></div>
<div style="position:absolute;left:1783px;top:996.00px;height:20px;line-height:20px;font-size:15.4px;color:#3d90ce;font-weight:400;white-space:nowrap;"><a>dccatlanta-1-12</a></div>
<div style="position:absolute;left:2196px;top:996.00px;height:20px;line-height:20px;font-size:15.4px;color:#8e9297;font-weight:400;white-space:nowrap;">2d20h</div>
<div style="position:absolute;left:2319px;top:996.00px;height:20px;line-height:20px;font-size:15.4px;color:#ce3933;font-weight:400;white-space:nowrap;">Evicted</div>
<div style="position:absolute;left:2502.00px;top:996.80px;width:4.4px;height:4.4px;border-radius:50%;background:#8e9297"></div><div style="position:absolute;left:2502.00px;top:1002.60px;width:4.4px;height:4.4px;border-radius:50%;background:#8e9297"></div><div style="position:absolute;left:2502.00px;top:1008.40px;width:4.4px;height:4.4px;border-radius:50%;background:#8e9297"></div>
<div style="position:absolute;left:340px;top:1033.1px;width:15px;height:15.6px;border:2px solid #979a9f;border-radius:3px"></div>
<div style="position:absolute;left:374px;top:1032.42px;height:20px;line-height:20px;font-size:15.4px;color:#8e9297;font-weight:400;white-space:nowrap;">united-manufacturing-hub-nodered-0</div>
<div style="position:absolute;left:874px;top:1032.42px;height:20px;line-height:20px;font-size:15.4px;color:#8e9297;font-weight:400;white-space:nowrap;">united-manufacturing-hub</div>
<div class="abs" style="left:1101px;top:1038.72px;width:9px;height:9px;border-radius:2px;background:#4caf50"></div>
<div class="abs" style="left:1119px;top:1038.72px;width:9px;height:9px;border-radius:2px;background:#4c5053"></div>
<div class="abs" style="left:1137px;top:1038.72px;width:9px;height:9px;border-radius:2px;background:#4c5053"></div>
<div style="position:absolute;left:1329px;top:1032.42px;height:20px;line-height:20px;font-size:15.4px;color:#8e9297;font-weight:400;white-space:nowrap;">3</div>
<div style="position:absolute;left:1556px;top:1032.42px;height:20px;line-height:20px;font-size:15.4px;color:#3d90ce;font-weight:400;white-space:nowrap;"><a>StatefulSet</a></div>
<div style="position:absolute;left:1783px;top:1032.42px;height:20px;line-height:20px;font-size:15.4px;color:#3d90ce;font-weight:400;white-space:nowrap;"><a>dccatlanta-1-12</a></div>
<div style="position:absolute;left:2011px;top:1032.42px;height:20px;line-height:20px;font-size:15.4px;color:#8e9297;font-weight:400;white-space:nowrap;">BestEffort</div>
<div style="position:absolute;left:2196px;top:1032.42px;height:20px;line-height:20px;font-size:15.4px;color:#8e9297;font-weight:400;white-space:nowrap;">13d</div>
<div style="position:absolute;left:2319px;top:1032.42px;height:20px;line-height:20px;font-size:15.4px;color:#4caf50;font-weight:400;white-space:nowrap;">Running</div>
<div style="position:absolute;left:2502.00px;top:1033.22px;width:4.4px;height:4.4px;border-radius:50%;background:#8e9297"></div><div style="position:absolute;left:2502.00px;top:1039.02px;width:4.4px;height:4.4px;border-radius:50%;background:#8e9297"></div><div style="position:absolute;left:2502.00px;top:1044.82px;width:4.4px;height:4.4px;border-radius:50%;background:#8e9297"></div>
<div style="position:absolute;left:340px;top:1069.5px;width:15px;height:15.6px;border:2px solid #979a9f;border-radius:3px"></div>
<div style="position:absolute;left:374px;top:1068.84px;height:20px;line-height:20px;font-size:15.4px;color:#8e9297;font-weight:400;white-space:nowrap;">united-manufacturing-hub-sensorconnect-0</div>
<svg style="position:absolute;left:802px;top:1066.84px" width="24" height="21" viewBox="0 0 24 21"><path d="M11.8 1.1 L22.7 19.3 L0.9 19.3 Z" fill="#ffc63d" stroke="#ffc63d" stroke-width="0.6" stroke-linejoin="round"/><rect x="10.95" y="8.6" width="1.8" height="3.4" fill="#262b2f"/><rect x="10.95" y="14.2" width="1.8" height="1.8" fill="#262b2f"/></svg>
<div style="position:absolute;left:874px;top:1068.84px;height:20px;line-height:20px;font-size:15.4px;color:#8e9297;font-weight:400;white-space:nowrap;">united-manufacturing-hub</div>
<div class="abs" style="left:1101px;top:1075.14px;width:9px;height:9px;border-radius:2px;background:#4c5053"></div>
<div style="position:absolute;left:1329px;top:1068.84px;height:20px;line-height:20px;font-size:15.4px;color:#8e9297;font-weight:400;white-space:nowrap;">891</div>
<div style="position:absolute;left:1556px;top:1068.84px;height:20px;line-height:20px;font-size:15.4px;color:#3d90ce;font-weight:400;white-space:nowrap;"><a>StatefulSet</a></div>
<div style="position:absolute;left:1783px;top:1068.84px;height:20px;line-height:20px;font-size:15.4px;color:#3d90ce;font-weight:400;white-space:nowrap;"><a>dccatlanta-1-12</a></div>
<div style="position:absolute;left:2011px;top:1068.84px;height:20px;line-height:20px;font-size:15.4px;color:#8e9297;font-weight:400;white-space:nowrap;">Burstable</div>
<div style="position:absolute;left:2196px;top:1068.84px;height:20px;line-height:20px;font-size:15.4px;color:#8e9297;font-weight:400;white-space:nowrap;">6d23h</div>
<div style="position:absolute;left:2319px;top:1068.84px;height:20px;line-height:20px;font-size:15.4px;color:#4caf50;font-weight:400;white-space:nowrap;">Running</div>
<div style="position:absolute;left:2502.00px;top:1069.64px;width:4.4px;height:4.4px;border-radius:50%;background:#8e9297"></div><div style="position:absolute;left:2502.00px;top:1075.44px;width:4.4px;height:4.4px;border-radius:50%;background:#8e9297"></div><div style="position:absolute;left:2502.00px;top:1081.24px;width:4.4px;height:4.4px;border-radius:50%;background:#8e9297"></div>
<div style="position:absolute;left:340px;top:1106.0px;width:15px;height:15.6px;border:2px solid #979a9f;border-radius:3px"></div>
<div style="position:absolute;left:374px;top:1105.26px;height:20px;line-height:20px;font-size:15.4px;color:#8e9297;font-weight:400;white-space:nowrap;">united-manufacturing-hub-vernemq-0</div>
<svg style="position:absolute;left:802px;top:1103.26px" width="24" height="21" viewBox="0 0 24 21"><path d="M11.8 1.1 L22.7 19.3 L0.9 19.3 Z" fill="#ffc63d" stroke="#ffc63d" stroke-width="0.6" stroke-linejoin="round"/><rect x="10.95" y="8.6" width="1.8" height="3.4" fill="#262b2f"/><rect x="10.95" y="14.2" width="1.8" height="1.8" fill="#262b2f"/></svg>
<div style="position:absolute;left:874px;top:1105.26px;height:20px;line-height:20px;font-size:15.4px;color:#8e9297;font-weight:400;white-space:nowrap;">united-manufacturing-hub</div>
<div style="position:absolute;left:1329px;top:1105.26px;height:20px;line-height:20px;font-size:15.4px;color:#8e9297;font-weight:400;white-space:nowrap;">0</div>
<div style="position:absolute;left:1556px;top:1105.26px;height:20px;line-height:20px;font-size:15.4px;color:#3d90ce;font-weight:400;white-space:nowrap;"><a>StatefulSet</a></div>
<div style="position:absolute;left:2011px;top:1105.26px;height:20px;line-height:20px;font-size:15.4px;color:#8e9297;font-weight:400;white-space:nowrap;">BestEffort</div>
<div style="position:absolute;left:2196px;top:1105.26px;height:20px;line-height:20px;font-size:15.4px;color:#8e9297;font-weight:400;white-space:nowrap;">2d20h</div>
<div style="position:absolute;left:2319px;top:1105.26px;height:20px;line-height:20px;font-size:15.4px;color:#ff9800;font-weight:400;white-space:nowrap;">Pending</div>
<div style="position:absolute;left:2502.00px;top:1106.06px;width:4.4px;height:4.4px;border-radius:50%;background:#8e9297"></div><div style="position:absolute;left:2502.00px;top:1111.86px;width:4.4px;height:4.4px;border-radius:50%;background:#8e9297"></div><div style="position:absolute;left:2502.00px;top:1117.66px;width:4.4px;height:4.4px;border-radius:50%;background:#8e9297"></div>
<div style="position:absolute;left:340px;top:1142.4px;width:15px;height:15.6px;border:2px solid #979a9f;border-radius:3px"></div>
<div style="position:absolute;left:374px;top:1141.68px;height:20px;line-height:20px;font-size:15.4px;color:#8e9297;font-weight:400;white-space:nowrap;">united-manufacturing-hub-zookeeper-0</div>
<div style="position:absolute;left:874px;top:1141.68px;height:20px;line-height:20px;font-size:15.4px;color:#8e9297;font-weight:400;white-space:nowrap;">united-manufacturing-hub</div>
<div class="abs" style="left:1101px;top:1147.98px;width:9px;height:9px;border-radius:2px;background:#4caf50"></div>
<div style="position:absolute;left:1329px;top:1141.68px;height:20px;line-height:20px;font-size:15.4px;color:#8e9297;font-weight:400;white-space:nowrap;">3</div>
<div style="position:absolute;left:1556px;top:1141.68px;height:20px;line-height:20px;font-size:15.4px;color:#3d90ce;font-weight:400;white-space:nowrap;"><a>StatefulSet</a></div>
<div style="position:absolute;left:1783px;top:1141.68px;height:20px;line-height:20px;font-size:15.4px;color:#3d90ce;font-weight:400;white-space:nowrap;"><a>dccatlanta-1-12</a></div>
<div style="position:absolute;left:2011px;top:1141.68px;height:20px;line-height:20px;font-size:15.4px;color:#8e9297;font-weight:400;white-space:nowrap;">Burstable</div>
<div style="position:absolute;left:2196px;top:1141.68px;height:20px;line-height:20px;font-size:15.4px;color:#8e9297;font-weight:400;white-space:nowrap;">13d</div>
<div style="position:absolute;left:2319px;top:1141.68px;height:20px;line-height:20px;font-size:15.4px;color:#4caf50;font-weight:400;white-space:nowrap;">Running</div>
<div style="position:absolute;left:2502.00px;top:1142.48px;width:4.4px;height:4.4px;border-radius:50%;background:#8e9297"></div><div style="position:absolute;left:2502.00px;top:1148.28px;width:4.4px;height:4.4px;border-radius:50%;background:#8e9297"></div><div style="position:absolute;left:2502.00px;top:1154.08px;width:4.4px;height:4.4px;border-radius:50%;background:#8e9297"></div>
</div>
</body></html>
